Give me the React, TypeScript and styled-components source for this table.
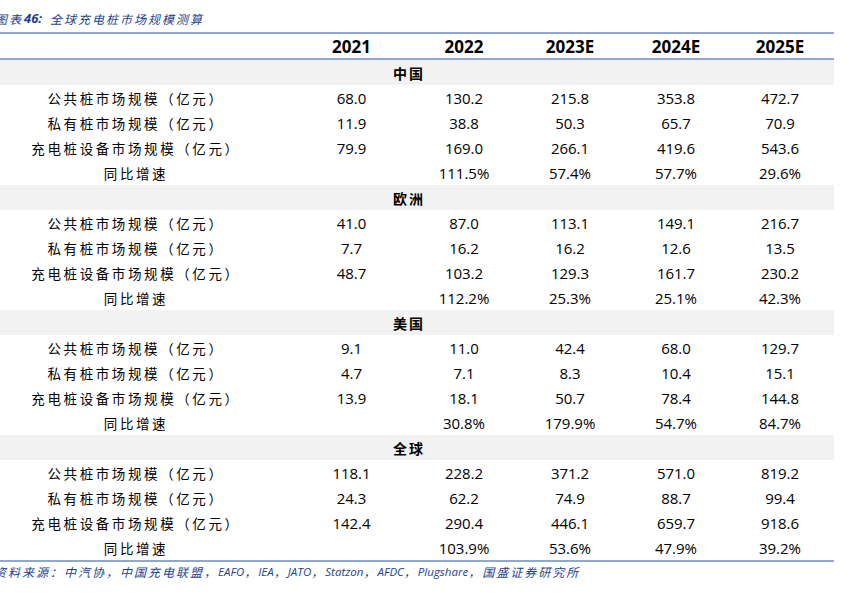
import React from "react";
import styled, { createGlobalStyle } from "styled-components";

const GlobalStyle = createGlobalStyle`
  html, body { margin: 0; padding: 0; background: #ffffff; }
  body { font-family: "Open Sans", "Noto Sans CJK SC", sans-serif; color: #000; }
`;

const CJK = `"Noto Sans CJK SC", "Noto Sans", sans-serif`;
const NUM = `"Open Sans", "Noto Sans CJK SC", sans-serif`;
const LINE = "#8ea8d2";
const BLUE = "#1d3f8e";

const Page = styled.div`
  width: 854px;
  height: 593px;
  overflow: hidden;
  display: flex;
  flex-direction: column;
`;

const Caption = styled.div`
  height: 32px;
  box-sizing: border-box;
  padding-top: 4px;
  display: flex;
  align-items: center;
  margin-left: -5px;
  color: ${BLUE};
  font-style: italic;
  white-space: nowrap;
`;

const CapCjk = styled.span`
  font-family: ${CJK};
  font-size: 12px;
  letter-spacing: 2px;
`;

const CapNum = styled.span`
  font-family: ${NUM};
  font-size: 13px;
  font-weight: 700;
  margin-left: 1px;
  margin-right: 8px;
`;

const Table = styled.div`
  width: 834px;
  border-top: 2px solid ${LINE};
  border-bottom: 2px solid ${LINE};
  display: flex;
  flex-direction: column;
`;

const COLS = "272px 159px 66px 146px 66px 142px";

const HeadRow = styled.div`
  display: grid;
  grid-template-columns: ${COLS};
  height: 24px;
  align-items: center;
  border-bottom: 2px solid ${LINE};
`;

const HeadCell = styled.div`
  text-align: center;
  font-family: ${NUM};
  font-weight: 700;
  font-size: 17px;
  white-space: nowrap;
`;

const Band = styled.div`
  height: 25px;
  background: #f2f2f2;
  display: flex;
  align-items: center;
  justify-content: center;
  padding-right: 16px;
  font-family: ${CJK};
  font-weight: 700;
  font-size: 14px;
  letter-spacing: 2px;
`;

const Row = styled.div`
  display: grid;
  grid-template-columns: ${COLS};
  height: 25px;
  align-items: center;
`;

const Label = styled.div`
  text-align: center;
  font-family: ${CJK};
  font-size: 13.5px;
  letter-spacing: 2.6px;
  white-space: nowrap;
`;

const Num = styled.div`
  text-align: center;
  font-family: ${NUM};
  font-size: 15px;
  white-space: nowrap;
`;

const Source = styled.div`
  height: 18px;
  display: flex;
  align-items: center;
  margin-left: -6px;
  color: ${BLUE};
  font-style: italic;
  white-space: nowrap;
`;

const SrcCjk = styled.span`
  font-family: ${CJK};
  font-size: 12px;
  letter-spacing: 2px;
`;

const SrcLatin = styled.span`
  font-family: ${NUM};
  font-size: 11.5px;
`;

type Line = { label: string; values: string[] };
type Section = { name: string; lines: Line[] };

const years = ["2021", "2022", "2023E", "2024E", "2025E"];

const sections: Section[] = [
  {
    name: "中国",
    lines: [
      { label: "公共桩市场规模（亿元）", values: ["68.0", "130.2", "215.8", "353.8", "472.7"] },
      { label: "私有桩市场规模（亿元）", values: ["11.9", "38.8", "50.3", "65.7", "70.9"] },
      { label: "充电桩设备市场规模（亿元）", values: ["79.9", "169.0", "266.1", "419.6", "543.6"] },
      { label: "同比增速", values: ["", "111.5%", "57.4%", "57.7%", "29.6%"] },
    ],
  },
  {
    name: "欧洲",
    lines: [
      { label: "公共桩市场规模（亿元）", values: ["41.0", "87.0", "113.1", "149.1", "216.7"] },
      { label: "私有桩市场规模（亿元）", values: ["7.7", "16.2", "16.2", "12.6", "13.5"] },
      { label: "充电桩设备市场规模（亿元）", values: ["48.7", "103.2", "129.3", "161.7", "230.2"] },
      { label: "同比增速", values: ["", "112.2%", "25.3%", "25.1%", "42.3%"] },
    ],
  },
  {
    name: "美国",
    lines: [
      { label: "公共桩市场规模（亿元）", values: ["9.1", "11.0", "42.4", "68.0", "129.7"] },
      { label: "私有桩市场规模（亿元）", values: ["4.7", "7.1", "8.3", "10.4", "15.1"] },
      { label: "充电桩设备市场规模（亿元）", values: ["13.9", "18.1", "50.7", "78.4", "144.8"] },
      { label: "同比增速", values: ["", "30.8%", "179.9%", "54.7%", "84.7%"] },
    ],
  },
  {
    name: "全球",
    lines: [
      { label: "公共桩市场规模（亿元）", values: ["118.1", "228.2", "371.2", "571.0", "819.2"] },
      { label: "私有桩市场规模（亿元）", values: ["24.3", "62.2", "74.9", "88.7", "99.4"] },
      { label: "充电桩设备市场规模（亿元）", values: ["142.4", "290.4", "446.1", "659.7", "918.6"] },
      { label: "同比增速", values: ["", "103.9%", "53.6%", "47.9%", "39.2%"] },
    ],
  },
];

const sourceParts: { t: string; latin?: boolean }[] = [
  { t: "资料来源：中汽协，中国充电联盟，" },
  { t: "EAFO", latin: true },
  { t: "，" },
  { t: "IEA", latin: true },
  { t: "，" },
  { t: "JATO", latin: true },
  { t: "，" },
  { t: "Statzon", latin: true },
  { t: "，" },
  { t: "AFDC", latin: true },
  { t: "，" },
  { t: "Plugshare", latin: true },
  { t: "，国盛证券研究所" },
];

export default function App() {
  return (
    <>
      <GlobalStyle />
      <Page>
        <Caption>
          <CapCjk>图表</CapCjk>
          <CapNum>46:</CapNum>
          <CapCjk>全球充电桩市场规模测算</CapCjk>
        </Caption>
        <Table>
          <HeadRow>
            <div />
            {years.map((y) => (
              <HeadCell key={y}>{y}</HeadCell>
            ))}
          </HeadRow>
          {sections.map((s) => (
            <React.Fragment key={s.name}>
              <Band>{s.name}</Band>
              {s.lines.map((l) => (
                <Row key={s.name + l.label}>
                  <Label>{l.label}</Label>
                  {l.values.map((v, i) => (
                    <Num key={i}>{v}</Num>
                  ))}
                </Row>
              ))}
            </React.Fragment>
          ))}
        </Table>
        <Source>
          {sourceParts.map((p, i) =>
            p.latin ? <SrcLatin key={i}>{p.t}</SrcLatin> : <SrcCjk key={i}>{p.t}</SrcCjk>
          )}
        </Source>
      </Page>
    </>
  );
}
